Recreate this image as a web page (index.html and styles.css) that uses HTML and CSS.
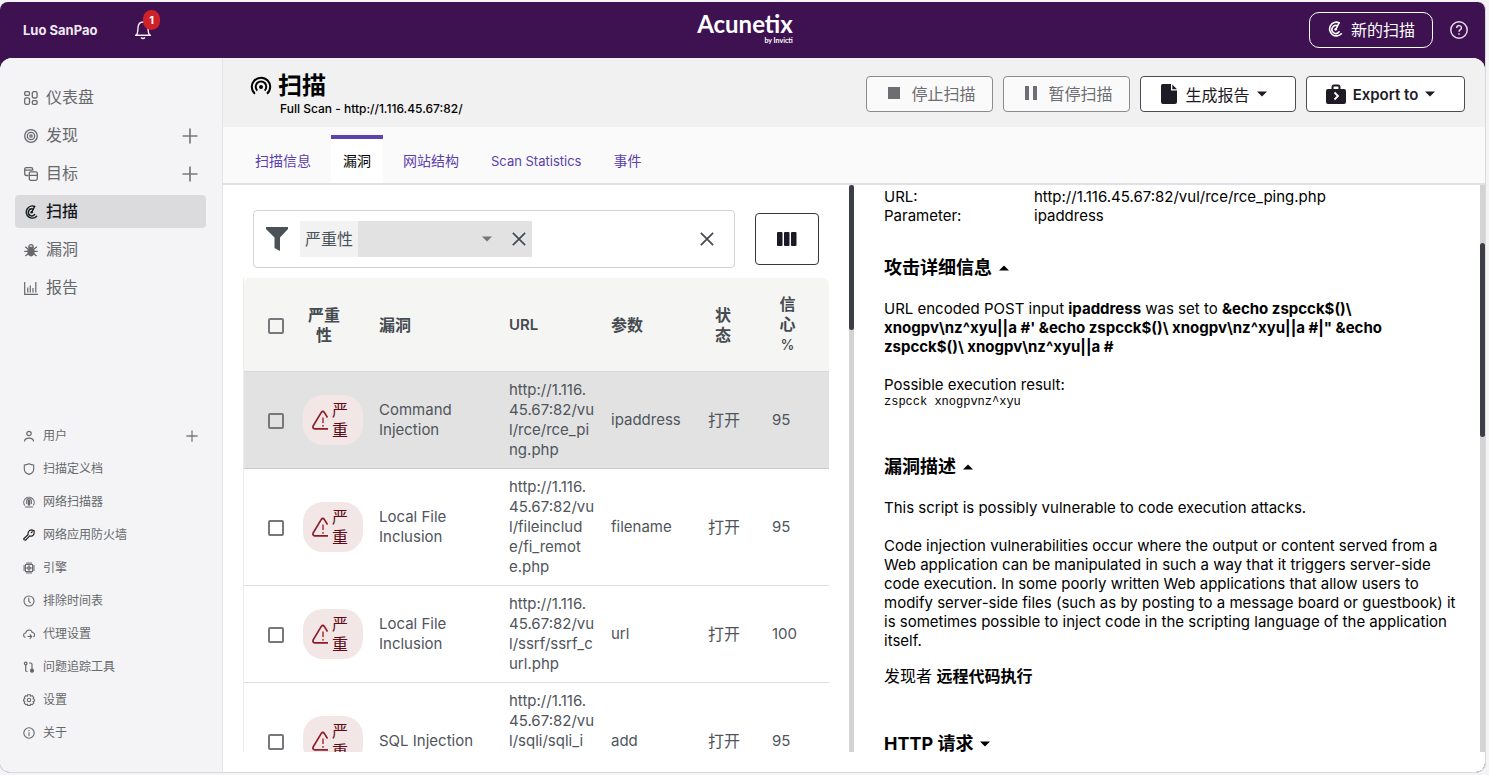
FILE: index.html
```html
<!DOCTYPE html>
<html lang="zh-CN">
<head>
<meta charset="utf-8">
<title>Acunetix - 扫描</title>
<link rel="stylesheet" href="styles.css">
</head>
<body>
<svg class="sprite" aria-hidden="true">
  <symbol id="i-plus" viewBox="0 0 16 16"><path d="M8 0.5v15M0.500 8h15" fill="none" stroke="currentColor" stroke-width="1.700"/></symbol>
  <symbol id="i-close" viewBox="0 0 16 16"><path d="M1 1l14 14M15 1l-14 14" fill="none" stroke="currentColor" stroke-width="2"/></symbol>
  <symbol id="i-down" viewBox="0 0 10 6"><path d="M0 0.500h10L5 5.500z" fill="currentColor"/></symbol>
  <symbol id="i-up" viewBox="0 0 10 6"><path d="M0 5.500h10L5 0.500z" fill="currentColor"/></symbol>
  <symbol id="i-scan" viewBox="0 0 14 14"><g fill="none" stroke="currentColor" stroke-width="1.400" stroke-linecap="round"><path d="M10.600 1.500A6 6 0 1 0 12.600 11.200"/><path d="M9 4.100A3.500 3.500 0 1 0 10.600 9.500"/><path d="M10.600 1.500L7.800 7.200"/></g><circle cx="7.600" cy="7.300" r="1.200" fill="currentColor"/></symbol>
  <symbol id="i-warn" viewBox="0 0 16 20"><path d="M15.500 7.500L12.300 2.400Q10.800 0.200 9.300 2.400L1.200 15.800Q0.200 18.600 2.800 18.800H16" fill="none" stroke="#8c1d26" stroke-width="1.700"/><path d="M11 7.500v5.500M11 15v1.800" stroke="#a8323b" stroke-width="1.500"/></symbol>
</svg>
<div class="window">
  <header class="topbar">
    <span class="user">Luo SanPao</span>
    <button class="bell" aria-label="通知">
      <svg width="18" height="20" viewBox="0 0 18 20" fill="none" stroke="currentColor" stroke-width="1.400"><path d="M1 15.300h16M2.300 15.300C4 13.500 3.800 11 4 7.500 4.300 4 6 2 9 2s4.700 2 5 5.500c.2 3.500 0 6 1.700 7.800" stroke-linejoin="round"/><path d="M7 17.500q2 2 4 0"/></svg>
      <span class="badge">1</span>
    </button>
    <div class="logo"><span class="logo-name">Acunetix</span><span class="logo-by">by Invicti</span></div>
    <div class="top-actions">
      <button class="new-scan"><svg width="16" height="16"><use href="#i-scan"/></svg>新的扫描</button>
      <button class="help" aria-label="帮助"><svg width="20" height="20" viewBox="0 0 20 20" fill="none" stroke="currentColor" stroke-width="1.500"><circle cx="10" cy="10" r="8.200"/><path d="M7.700 8c0-3.300 4.800-3 4.700-.1 0 1.700-2.400 1.800-2.400 3.900"/><path d="M10 13.300v1.500"/></svg></button>
    </div>
  </header>
  <div class="body">
    <nav class="sidebar">
      <div class="menu">
        <a href="#" class="item"><svg width="14" height="14" viewBox="0 0 14 14" fill="none" stroke="currentColor" stroke-width="1.300"><rect x=".7" y=".7" width="4.800" height="3.600" rx="1.200"/><rect x="8.300" y=".7" width="4.800" height="6.300" rx="1.500"/><rect x=".7" y="6.800" width="4.800" height="6.500" rx="1.500"/><rect x="8.300" y="9.600" width="4.800" height="3.700" rx="1.200"/></svg>仪表盘</a>
        <a href="#" class="item"><svg width="14" height="14" viewBox="0 0 14 14" fill="none" stroke="currentColor" stroke-width="1.300"><circle cx="7" cy="7" r="6.300"/><circle cx="7" cy="7" r="3.700"/><circle cx="7" cy="7" r="1.200"/></svg>发现<svg class="plus" width="16" height="16"><use href="#i-plus"/></svg></a>
        <a href="#" class="item"><svg width="14" height="14" viewBox="0 0 14 14" fill="none" stroke="currentColor" stroke-width="1.300"><path d="M4.500 8.500H2.500Q.7 8.500.7 6.800V2.300Q.7.700 2.500.700H7q1.700 0 1.700 1.600v1.200M.7 3.200h8"/><rect x="5.300" y="4.800" width="8" height="8.500" rx="1.500"/><path d="M5.300 8.300h8"/></svg>目标<svg class="plus" width="16" height="16"><use href="#i-plus"/></svg></a>
        <a href="#" class="item active" aria-current="page"><svg width="14" height="14"><use href="#i-scan"/></svg>扫描</a>
        <a href="#" class="item"><svg width="14" height="14" viewBox="0 0 14 14"><ellipse cx="7" cy="8.700" rx="3.700" ry="4.700" fill="currentColor"/><path d="M4.800 4.300a2.200 2.700 0 0 1 4.400 0zM.3 8.300h13.400M1.200 3.800l3 2.500M12.800 3.800l-3 2.500M1.400 13l3-2.500M12.600 13l-3-2.500" fill="none" stroke="currentColor" stroke-width="1.300"/></svg>漏洞</a>
        <a href="#" class="item"><svg width="14" height="14" viewBox="0 0 14 14" fill="none" stroke="currentColor" stroke-width="1.200"><path d="M.7 1v12.300H14M3.800 6.500v5M6.300 4.500v7M9 7v4.500M11.800 1v10.500"/></svg>报告</a>
      </div>
      <div class="menu minor">
        <a href="#" class="item"><svg width="12" height="12" viewBox="0 0 12 12" fill="none" stroke="currentColor" stroke-width="1.200"><circle cx="6" cy="3.500" r="2.200"/><path d="M1.500 11.500c0-4.500 9-4.500 9 0"/></svg>用户<svg class="plus" width="12" height="12"><use href="#i-plus"/></svg></a>
        <a href="#" class="item"><svg width="12" height="12" viewBox="0 0 12 12" fill="none" stroke="currentColor" stroke-width="1.100"><path d="M6 .8Q8.500 2 10.700 2v4q0 4-4.700 5.400Q1.300 10 1.300 6V2Q3.500 2 6 .8z"/></svg>扫描定义档</a>
        <a href="#" class="item"><svg width="12" height="12" viewBox="0 0 12 12" fill="none" stroke="currentColor" stroke-width="1.100"><path d="M1.800 9.500a5.200 5.200 0 1 1 8.400 0M2 11h8"/><path d="M3.700 8V4.500Q4 2.500 6 2.500t2.300 2V8"/><path d="M6 3.500v6" stroke-width="2.500"/></svg>网络扫描器</a>
        <a href="#" class="item dark"><svg width="12" height="12" viewBox="0 0 12 12" fill="none" stroke="currentColor" stroke-width="1.200"><path d="M.8 9.700L5.200 5.500C4.700 3.500 5.800 1 8.500.9l2.600.8v3C10.500 6.900 8.500 7.500 6.700 6.900L2.600 11.200Q.5 11.300.8 9.700z"/><path d="M8 4l1.600-1.600"/></svg>网络应用防火墙</a>
        <a href="#" class="item"><svg width="12" height="12" viewBox="0 0 12 12" fill="none" stroke="currentColor" stroke-width="1.300"><rect x="2.300" y="2.300" width="7.400" height="7.400" rx="1"/><circle cx="6" cy="6" r="1.200"/><path d="M4 0v2M6 0v5M8 0v2M4 10v2M6 7v5M8 10v2M0 4h2M0 6h5M0 8h2M10 4h2M7 6h5M10 8h2" stroke-width=".9"/></svg>引擎</a>
        <a href="#" class="item"><svg width="12" height="12" viewBox="0 0 12 12" fill="none" stroke="currentColor" stroke-width="1.100"><circle cx="6" cy="6" r="5"/><path d="M5.800 2.800v3.500l2 1.800"/></svg>排除时间表</a>
        <a href="#" class="item"><svg width="12" height="12" viewBox="0 0 12 12" fill="none" stroke="currentColor" stroke-width="1.100"><path d="M2.500 9.500C-.5 8.500.3 5 2.700 5c.8-4 6-3.800 6.500-.5C12 4.500 12.300 8 10.300 8.700M4.500 8.500h4M6.700 6.500l2 2-2 2.500"/></svg>代理设置</a>
        <a href="#" class="item"><svg width="12" height="12" viewBox="0 0 12 12" fill="none" stroke="currentColor" stroke-width="1.200"><circle cx="2.700" cy="2.500" r="1.300"/><path d="M2.700 4v5.500q0 1 1.800 1M6 2h1.500Q9 2 9 3.500V8"/><circle cx="9" cy="9.700" r="1.500" fill="currentColor"/></svg>问题追踪工具</a>
        <a href="#" class="item"><svg width="12" height="12" viewBox="0 0 12 12" fill="none" stroke="currentColor" stroke-width="1.100"><path d="M4.700.8h2.600l.4 1.400 1.500-.6 1.500 1.700-.6 1.400 1.300.6v1.800l-1.300.5.6 1.500-1.500 1.600-1.500-.5-.5 1.200H4.800l-.5-1.200-1.500.5-1.500-1.600.6-1.500L.6 7.100V5.300l1.300-.6-.6-1.400 1.500-1.700 1.500.6z"/><circle cx="6" cy="6" r="1.700"/></svg>设置</a>
        <a href="#" class="item"><svg width="12" height="12" viewBox="0 0 12 12" fill="none" stroke="currentColor" stroke-width="1.100"><circle cx="6" cy="6" r="5.200"/><path d="M6 3v1.200M6 5.200V9"/></svg>关于</a>
      </div>
    </nav>
    <main class="main">
      <div class="page-head">
        <div>
          <h1><svg width="22" height="22" viewBox="0 0 22 22" fill="none" stroke="currentColor" stroke-width="2"><path d="M5 18.800a9.200 9.200 0 1 1 12 0"/><path d="M7.300 15.600a5.300 5.300 0 1 1 7.400 0"/><circle cx="11" cy="12" r="2" fill="currentColor" stroke="none"/></svg>扫描</h1>
          <p class="sub">Full Scan - http://1.116.45.67:82/</p>
        </div>
        <div class="actions">
          <button class="btn" disabled><svg width="14" height="14" viewBox="0 0 14 14"><path d="M1 1h12v12H1z" fill="currentColor"/></svg>停止扫描</button>
          <button class="btn" disabled><svg width="14" height="14" viewBox="0 0 14 14"><path d="M1 0h4v14H1zM9 0h4v14H9z" fill="currentColor"/></svg>暂停扫描</button>
          <button class="btn report"><svg width="18" height="20" viewBox="0 0 18 20"><path d="M2.500 0H11v6.500h6V18q0 2-2 2H3q-2 0-2-2V2Q1 0 2.500 0zM12.300.5L17 5.300h-4.700z" fill="currentColor"/></svg>生成报告<svg width="10" height="6"><use href="#i-down"/></svg></button>
          <button class="btn export"><svg width="20" height="20" viewBox="0 0 20 20"><path d="M2 5h16q2 0 2 2v11q0 2-2 2H2q-2 0-2-2V7q0-2 2-2z" fill="currentColor"/><path d="M6.500 5V3q0-1.500 1.500-1.500h4q1.500 0 1.500 1.500v2" fill="none" stroke="currentColor" stroke-width="2"/><path d="M8.500 8.500L12 12l-3.500 3.500" fill="none" stroke="#fff" stroke-width="1.800"/></svg>Export to<svg width="10" height="6"><use href="#i-down"/></svg></button>
        </div>
      </div>
      <div class="tabs">
        <a href="#" class="tab">扫描信息</a><a href="#" class="tab current">漏洞</a><a href="#" class="tab">网站结构</a><a href="#" class="tab latin">Scan Statistics</a><a href="#" class="tab">事件</a>
      </div>
      <div class="split">
        <section class="list">
          <div class="filters">
            <div class="filter-box">
              <svg width="24" height="24" viewBox="0 0 24 24"><path d="M1 0h22v2l-8 8.500V24l-5.500-3V10.500L1 2z" fill="#4a5157"/></svg>
              <div class="chip"><label class="chip-name" for="severity">严重性</label><span class="chip-select"><select id="severity"><option value=""></option></select><svg width="10" height="6"><use href="#i-down"/></svg></span><button class="chip-x" aria-label="移除"><svg width="14" height="14"><use href="#i-close"/></svg></button></div>
              <button class="clear" aria-label="清除"><svg width="14" height="14"><use href="#i-close"/></svg></button>
            </div>
            <button class="columns" aria-label="列"><svg width="20" height="14" viewBox="0 0 20 14" fill="currentColor"><rect x="0" width="5.500" height="14" rx="1"/><rect x="7" width="5.500" height="14" rx="1"/><rect x="14" width="5.500" height="14" rx="1"/></svg></button>
          </div>
          <table class="vulns">
            <colgroup><col class="c-check"><col class="c-sev"><col><col class="c-url"><col class="c-param"><col class="c-status"><col class="c-conf"></colgroup>
            <thead><tr><th class="check"><input type="checkbox" aria-label="全选"></th><th class="h-sev">严重性</th><th>漏洞</th><th>URL</th><th>参数</th><th class="h-status">状态</th><th class="h-conf">信心 <span>%</span></th></tr></thead>
            <tbody>
              <tr class="selected"><td class="check"><input type="checkbox" aria-label="Command Injection"></td><td><span class="pill"><svg width="16" height="20"><use href="#i-warn"/></svg><span>严重</span></span></td><td>Command Injection</td><td>http://1.116.<br>45.67:82/vu<br>l/rce/rce_pi<br>ng.php</td><td>ipaddress</td><td class="status">打开</td><td class="conf">95</td></tr>
              <tr><td class="check"><input type="checkbox" aria-label="Local File Inclusion"></td><td><span class="pill"><svg width="16" height="20"><use href="#i-warn"/></svg><span>严重</span></span></td><td>Local File Inclusion</td><td>http://1.116.<br>45.67:82/vu<br>l/fileinclud<br>e/fi_remot<br>e.php</td><td>filename</td><td class="status">打开</td><td class="conf">95</td></tr>
              <tr><td class="check"><input type="checkbox" aria-label="Local File Inclusion"></td><td><span class="pill"><svg width="16" height="20"><use href="#i-warn"/></svg><span>严重</span></span></td><td>Local File Inclusion</td><td>http://1.116.<br>45.67:82/vu<br>l/ssrf/ssrf_c<br>url.php</td><td>url</td><td class="status">打开</td><td class="conf">100</td></tr>
              <tr><td class="check"><input type="checkbox" aria-label="SQL Injection"></td><td><span class="pill"><svg width="16" height="20"><use href="#i-warn"/></svg><span>严重</span></span></td><td>SQL Injection</td><td>http://1.116.<br>45.67:82/vu<br>l/sqli/sqli_i<br>uadd_update.<br>php</td><td>add</td><td class="status">打开</td><td class="conf">95</td></tr>
            </tbody>
          </table>
        </section>
        <div class="scroll"><div class="thumb thumb-list"></div></div>
        <section class="detail">
          <dl><dt>URL:</dt><dd>http://1.116.45.67:82/vul/rce/rce_ping.php</dd><dt>Parameter:</dt><dd>ipaddress</dd></dl>
          <h2>攻击详细信息<svg width="10" height="6"><use href="#i-up"/></svg></h2>
          <p>URL encoded POST input <b>ipaddress</b> was set to <b>&amp;echo zspcck$()\<br>xnogpv\nz^xyu||a #' &amp;echo zspcck$()\ xnogpv\nz^xyu||a #|" &amp;echo<br>zspcck$()\ xnogpv\nz^xyu||a #</b></p>
          <p>Possible execution result:</p>
          <pre>zspcck xnogpvnz^xyu</pre>
          <h2>漏洞描述<svg width="10" height="6"><use href="#i-up"/></svg></h2>
          <p>This script is possibly vulnerable to code execution attacks.</p>
          <p>Code injection vulnerabilities occur where the output or content served from a<br>Web application can be manipulated in such a way that it triggers server-side<br>code execution. In some poorly written Web applications that allow users to<br>modify server-side files (such as by posting to a message board or guestbook) it<br>is sometimes possible to inject code in the scripting language of the application<br>itself.</p>
          <p class="found">发现者 <b>远程代码执行</b></p>
          <h2 class="request">HTTP 请求<svg width="10" height="6"><use href="#i-down"/></svg></h2>
        </section>
        <div class="scroll"><div class="thumb thumb-detail"></div></div>
      </div>
    </main>
  </div>
</div>
</body>
</html>
```
FILE: styles.css
```css
* { box-sizing: border-box; }
html, body { height: 100%; }
body {
  margin: 0;
  padding: 2px 3px 2px 0;
  background: #f4f4f6;
  color: #000;
  font-family: Inter, "Noto Sans CJK SC", sans-serif;
  font-size: 15px;
  line-height: 19px;
  overflow: hidden;
}
.sprite { position: absolute; width: 0; height: 0; }
svg { display: block; flex: none; }
a { color: inherit; text-decoration: none; }
button { font-family: inherit; cursor: pointer; margin: 0; }
h1, h2, p, dl, dd, pre { margin: 0; }

.window {
  height: 100%;
  display: flex;
  flex-direction: column;
  background: #3e1151;
  border-radius: 8px 8px 10px 10px;
  border-right: 1px solid #d9d9dc;
  border-bottom: 1px solid #d9d9dc;
  overflow: hidden;
}
.topbar {
  flex: none;
  height: 56px;
  padding: 0 16px 0 23px;
  display: grid;
  grid-template-columns: 1fr auto 1fr;
  grid-template-rows: 56px;
  align-items: center;
  color: #fff;
}
.user { grid-column: 1; grid-row: 1; font-size: 13px; font-weight: 700; color: #f0e9f3; }
.bell { grid-column: 1; grid-row: 1; position: relative; justify-self: start; margin-left: 111px; padding: 0; border: 0; background: none; color: #f4eef6; }
.badge {
  position: absolute; left: 9px; top: -10px;
  width: 17px; height: 20px; border-radius: 9px;
  background: #cf2228; color: #fff;
  font-size: 11px; font-weight: 700; line-height: 20px; text-align: center;
}
.logo { grid-column: 2; display: flex; flex-direction: column; align-items: flex-end; padding: 0 2px 5px 0; }
.logo-name { font-family: Lato, sans-serif; font-weight: 700; font-size: 24px; line-height: 24px; }
.logo-by { font-family: Lato, sans-serif; font-weight: 700; font-size: 7px; line-height: 8px; }
.top-actions { grid-column: 3; justify-self: end; display: flex; align-items: center; gap: 16px; }
.new-scan {
  height: 36px; width: 124px; padding: 0 0 2px;
  display: flex; align-items: center; justify-content: center; gap: 8px;
  border: 1px solid #fff; border-radius: 10px;
  background: none; color: #fff; font-size: 16px;
}
.help { padding: 0; border: 0; background: none; color: #e4d9e9; }

.body {
  flex: 1; min-height: 0;
  display: flex;
  background: #fff;
  border-radius: 12px 12px 0 0;
  overflow: hidden;
}
.sidebar {
  flex: none; width: 223px;
  display: flex; flex-direction: column; justify-content: space-between;
  padding: 23px 16px 23px 15px;
  background: #f4f4f6; border-right: 1px solid #e4e4e6;
  color: #66686b;
}
.menu { display: flex; flex-direction: column; gap: 5px; }
.item {
  display: flex; align-items: center; gap: 8px;
  height: 33px; padding: 0 8px 0 9px;
  border-radius: 4px; font-size: 16px;
}
.item.active { background: #dbdbdd; color: #14181c; font-weight: 500; }
.plus { margin-left: auto; color: #77797c; }
.minor { gap: 0; }
.minor .item { padding-left: 8px; font-size: 12px; }
.item.dark svg { color: #222; }

.main { flex: 1; min-width: 0; display: flex; flex-direction: column; padding-bottom: 20px; }
.page-head {
  flex: none;
  display: flex; justify-content: space-between; align-items: flex-start;
  height: 69px; padding: 14px 20px 0 27px;
  background: #f1f1f1;
}
h1 { display: flex; align-items: center; gap: 6px; font-size: 24px; line-height: 28px; font-weight: 700; }
.sub { padding-left: 30px; font-size: 12px; line-height: 18px; font-weight: 500; }
.actions { display: flex; gap: 10px; padding-top: 4px; }
.btn {
  height: 36px; width: 127px; padding: 0 0 2px 4px;
  display: flex; align-items: center; justify-content: center; gap: 10px;
  border: 1px solid #4b4b53; border-radius: 4px;
  background: #fff; color: #1e1b26; font-size: 16px; font-weight: 400;
}
.btn:disabled { background: #fafafa; border-color: #8c8c90; color: #6d6d72; cursor: default; }
.btn.report { width: 156px; gap: 7px; padding: 0 9px 0 0; }
.btn.export { width: 159px; gap: 7px; padding: 0 10px 0 0; font-size: 15px; font-weight: 600; }
.tabs {
  flex: none;
  display: flex; align-items: flex-end; gap: 8px;
  height: 58px; padding: 8px 20px 0;
  background: #fafafa; border-bottom: 2px solid #dfe1e5;
}
.tab { height: 48px; padding: 0 12px; border-top: 4px solid transparent; font-size: 14px; line-height: 44px; color: #5b3fae; }
.tab.latin { font-size: 13px; }
.tab.current { background: #fff; border-top-color: #5e43b0; color: #000; }

.split { flex: 1; min-height: 0; display: grid; grid-template-columns: minmax(0, 1fr) 5px minmax(0, 1fr) 5px; grid-template-rows: minmax(0, 1fr); }
.list { padding: 25px 20px 0; overflow: hidden; }
.filters { display: flex; align-items: center; gap: 20px; padding: 0 10px 10px; }
.filter-box {
  flex: 1; height: 58px; padding: 0 20px 0 11px;
  display: flex; align-items: center; gap: 11px;
  border: 1px solid #cfd2d6; border-radius: 4px;
}
.chip { display: flex; align-items: center; height: 36px; background: #e2e2e2; color: #4a5157; }
.chip-name { width: 58px; line-height: 36px; background: #f2f2f2; font-size: 16px; text-align: center; }
.chip-select { display: flex; align-items: center; width: 134px; color: #74767a; }
.chip-select select { appearance: none; flex: 1; height: 36px; border: 0; background: none; }
.chip-x { margin-left: 14px; width: 26px; padding: 0 6px; border: 0; background: none; color: #444a50; }
.clear { margin-left: auto; padding: 0; border: 0; background: none; color: #444a50; }
.columns { width: 64px; height: 52px; padding: 0; display: flex; align-items: center; justify-content: center; border: 1px solid #36363c; border-radius: 4px; background: #fff; color: #1c1926; }

.vulns { width: 100%; table-layout: fixed; border-collapse: separate; border-spacing: 0; border-left: 1px solid #ececec; line-height: 20px; color: #4f555b; }
.c-check { width: 51px; }
.c-sev { width: 76px; }
.c-url { width: 102px; }
.c-param { width: 89px; }
.c-status { width: 64px; }
.c-conf { width: 73px; }
th { height: 94px; padding: 8px; background: #f5f5f3; border-bottom: 1px solid #d9d9d9; text-align: left; font-weight: 600; font-size: 16px; color: #454b51; }
th:nth-child(4) { font-size: 15px; }
th:first-child { border-top-left-radius: 6px; }
th:last-child { border-top-right-radius: 6px; }
td { padding: 8px; border-bottom: 1px solid #dedede; white-space: nowrap; }
td:nth-child(3) { white-space: normal; }
.selected td { background: #e2e2e2; border-bottom-color: #c9c9c9; }
.check { padding: 2px 0 0 24px; vertical-align: middle; }
.check input { appearance: none; display: block; width: 16px; height: 16px; margin: 0; border: 2px solid #77777c; border-radius: 2px; }
.h-sev { padding-right: 26px; text-align: center; }
.h-status { padding: 8px 22px 8px 20px; text-align: center; }
.h-conf { padding: 0 32px 0 22px; text-align: center; }
.h-conf span { font-size: 14px; font-weight: 500; }
.status { padding-left: 16px; font-size: 16px; }
.conf { padding-left: 16px; }
.pill {
  display: flex; align-items: center; gap: 4px;
  width: 60px; height: 50px; padding-left: 9px;
  border-radius: 20px; background: #f3e6e6;
  color: #5d0a16; font-size: 16px; white-space: normal;
}
.pill span { width: 16px; }

.scroll { background: #d3d3d3; }
.thumb { background: #3d3d47; border-radius: 3px; }
.thumb-list { height: 145px; }
.thumb-detail { height: 194px; margin-top: 58px; }

.detail { padding: 2px 20px 0 30px; overflow: hidden; white-space: nowrap; }
dl { display: grid; grid-template-columns: 150px 1fr; }
h2 { display: flex; align-items: center; gap: 7px; margin-top: 31px; font-size: 18px; line-height: 24px; font-weight: 700; }
.detail p { margin-top: 19px; }
.detail pre { font-family: "Liberation Mono", monospace; font-size: 12px; line-height: 16px; }
pre + h2 { margin-top: 45px; }
.detail .found { margin-top: 17px; font-size: 16px; }
.detail .request { margin-top: 46px; }
```
